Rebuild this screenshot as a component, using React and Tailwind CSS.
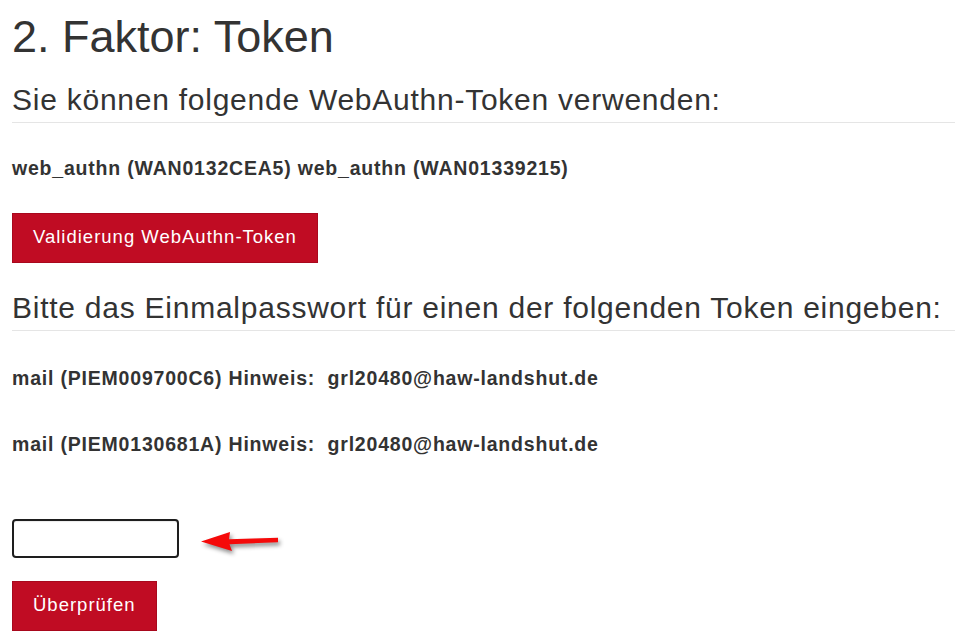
const Arrow = () => (
    <svg width="90" height="39" viewBox="0 0 90 39" className="ml-[17px] drop-shadow-[2px_3px_2px_rgba(0,0,0,0.45)]">
        <path d="M5 22.5 L34 13 L33 20.2 L82 18.8 L82 23.2 L33.5 25.2 L36 32 Z" fill="#f50a0a" />
    </svg>
);

export default function App() {
    return (
        <div className="min-h-screen bg-white pl-3 text-[#333] font-['Liberation_Sans',Arial,sans-serif]">
            {/* Titel */}
            <h1 className="pt-[13px] text-[45px] leading-[48px] font-normal">2. Faktor: Token</h1>

            {/* WebAuthn */}
            <h3 className="mt-[23px] pb-[6px] border-b border-[#e5e5e5] text-[30px] leading-[32px] tracking-[0.75px] font-normal">
                Sie können folgende WebAuthn-Token verwenden:
            </h3>
            <p className="mt-[33px] text-[19.5px] leading-[24px] font-bold tracking-[0.8px]">
                web_authn (WAN0132CEA5) web_authn (WAN01339215)
            </p>
            <button className="mt-[33px] h-[50px] px-5 pt-[11px] pb-[15px] bg-[#c00c23] border border-[#a8081d] text-white text-[18.5px] leading-[24px] tracking-[1px]">
                Validierung WebAuthn-Token
            </button>

            {/* OTP */}
            <h3 className="mt-[29px] pb-[6px] border-b border-[#e5e5e5] text-[30px] leading-[32px] tracking-[0.75px] font-normal">
                Bitte das Einmalpasswort für einen der folgenden Token eingeben:
            </h3>
            <p className="mt-[35px] text-[19.5px] leading-[24px] font-bold tracking-[0.8px] whitespace-pre">
                mail (PIEM009700C6) Hinweis:  grl20480@haw-landshut.de
            </p>
            <p className="mt-[42px] text-[19.5px] leading-[24px] font-bold tracking-[0.8px] whitespace-pre">
                mail (PIEM0130681A) Hinweis:  grl20480@haw-landshut.de
            </p>

            <div className="mt-[63px] flex items-start">
                <input
                    type="text"
                    className="w-[167px] h-[39px] border-2 border-[#1e1e1e] rounded-[4px] bg-white px-2 outline-none shadow-[inset_0_1px_1px_rgba(0,0,0,0.08)]"
                />
                <Arrow />
            </div>

            <button className="mt-[23px] h-[50px] px-5 pt-[11px] pb-[15px] bg-[#c00c23] border border-[#a8081d] text-white text-[18.5px] leading-[24px] tracking-[1px]">
                Überprüfen
            </button>
        </div>
    );
}
